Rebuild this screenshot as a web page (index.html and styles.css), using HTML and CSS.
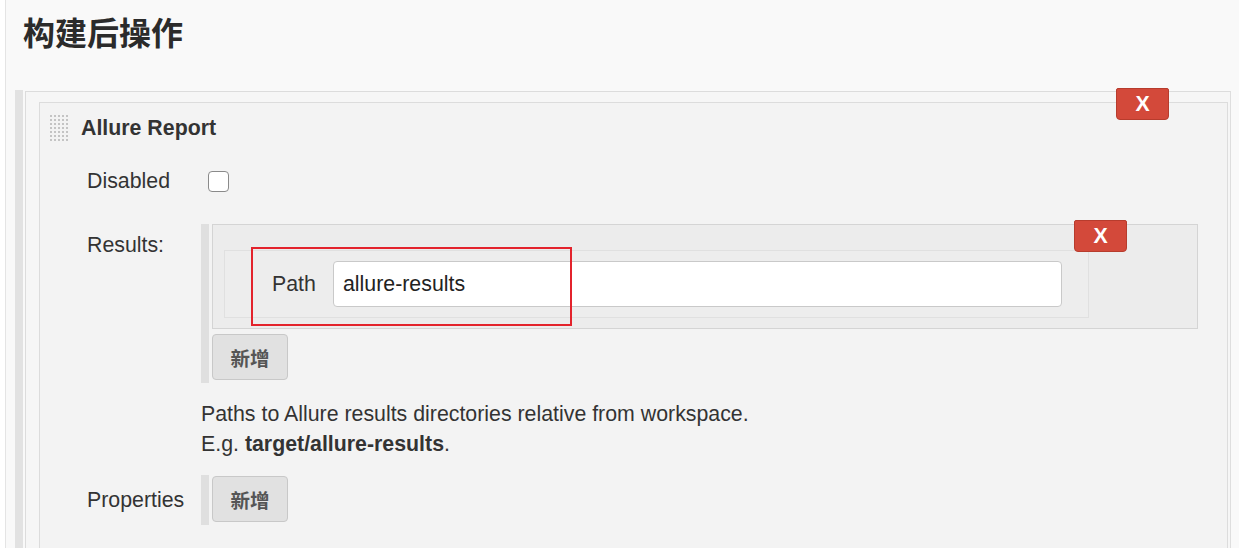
FILE: index.html
```html
<!DOCTYPE html>
<html lang="zh-CN">
<head>
  <meta charset="UTF-8">
  <meta name="viewport" content="width=device-width, initial-scale=1.0">
  <title>构建后操作</title>
  <link rel="stylesheet" href="styles.css">
</head>
<body>

  <div class="page">
    <h2 class="section-title">构建后操作</h2>

    <div class="publisher">
      <div class="chunk">
        <div class="box">
          <button class="delete-btn box-delete">X</button>

          <div class="box-header">
            <span class="handle"></span>
            <span class="box-name">Allure Report</span>
          </div>

          <div class="form">
            <div class="row row-disabled">
              <div class="label">Disabled</div>
              <div class="value"><input type="checkbox" class="check"></div>
            </div>

            <div class="row row-results">
              <div class="label label-top">Results:</div>
              <div class="value">
                <div class="repeater">
                  <div class="repeated">
                    <button class="delete-btn item-delete">X</button>
                    <div class="path-row">
                      <span class="path-label">Path</span>
                      <input type="text" class="path-input" value="allure-results">
                    </div>
                    <div class="highlight"></div>
                  </div>
                  <button class="add-btn">新增</button>
                </div>
              </div>
            </div>

            <div class="row row-help">
              <div class="label"></div>
              <div class="value help">
                Paths to Allure results directories relative from workspace.<br>
                E.g. <b>target/allure-results</b>.
              </div>
            </div>

            <div class="row row-props">
              <div class="label">Properties</div>
              <div class="value">
                <div class="repeater repeater-empty">
                  <button class="add-btn">新增</button>
                </div>
              </div>
            </div>
          </div>
        </div>
      </div>
    </div>
  </div>

</body>
</html>
```

FILE: styles.css
```css
body, html {
  height: 100%;
  margin: 0;
  overflow: hidden;
  background: #fff;
}

body {
  font-family: "Liberation Sans", Arial, "Noto Sans CJK SC", sans-serif;
  font-size: 21.33px;
  color: #333;
}

.page {
  display: flex;
  flex-direction: column;
  margin-left: 5px;
  height: 100%;
  border-left: 1px solid #e4e4e4;
  background: #f9f9f9;
}

.section-title {
  flex: none;
  margin: 0;
  padding: 9px 0 0 17px;
  height: 81px;
  box-sizing: border-box;
  font-family: "Noto Sans CJK SC", "Liberation Sans", sans-serif;
  font-size: 32px;
  line-height: 44px;
  font-weight: 700;
  color: #2b2b2b;
}

.publisher {
  flex: 1;
  display: flex;
  margin-left: 9px;
  margin-top: 9px;
  border-left: 8px solid #e2e2e2;
  padding-left: 2px;
}

.chunk {
  flex: 1;
  display: flex;
  flex-direction: column;
  border-left: 1px solid #dcdcdc;
  border-top: 1px solid #dcdcdc;
  border-right: 1px solid #dedede;
  margin-top: 1px;
  margin-right: 8px;
  background: #f6f6f6;
  padding: 10px 2px 0 13px;
}

.box {
  flex: 1;
  position: relative;
  border: 1px solid #dcdcdc;
  border-bottom: none;
  background: #f3f3f3;
}

/* red X buttons */
.delete-btn {
  position: absolute;
  width: 53px;
  height: 32px;
  padding: 0;
  border: 1px solid #b73c2d;
  border-radius: 2px 2px 4px 4px;
  background: #d3493a;
  color: #fff;
  font-family: "Liberation Sans", Arial, sans-serif;
  font-size: 21.33px;
  font-weight: 700;
  line-height: 30px;
  cursor: pointer;
}

.box-delete {
  top: -15px;
  right: 58px;
}

.item-delete {
  top: -5px;
  right: 70px;
}

.box-header {
  display: flex;
  align-items: center;
  padding: 11px 0 0 9px;
  height: 28px;
}

.handle {
  width: 20px;
  height: 28px;
  background-image: radial-gradient(circle, #c4c4c4 0.9px, transparent 1.3px);
  background-size: 4px 4px;
}

.box-name {
  margin-left: 12px;
  font-weight: 700;
}

.form {
  padding: 0 29px 0 47px;
}

.row {
  display: grid;
  grid-template-columns: 114px 1fr;
}

.label {
  line-height: 26px;
}

.row-disabled {
  margin-top: 26px;
  align-items: center;
}

.check {
  appearance: none;
  -webkit-appearance: none;
  display: block;
  margin: 0 0 0 7px;
  width: 21px;
  height: 21px;
  border: 1px solid #8a8a8a;
  border-radius: 4px;
  background: #fff;
}

.row-results {
  margin-top: 30px;
}

.label-top {
  padding-top: 8px;
}

.repeater {
  border-left: 8px solid #dfdfdf;
  padding: 0 0 3px 3px;
}

.repeater-empty {
  padding-top: 1px;
}

.repeated {
  position: relative;
  border: 1px solid #d4d4d4;
  background: #ececec;
  padding: 25px 108px 10px 11px;
}

.path-row {
  display: flex;
  align-items: center;
  border: 1px solid #e0e0e0;
  background: #ededed;
  padding: 10px 26px 10px 47px;
}

.path-label {
  width: 61px;
}

.path-input {
  flex: 1;
  height: 46px;
  box-sizing: border-box;
  border: 1px solid #c9c9c9;
  border-radius: 4px;
  background: #fff;
  padding: 0 9px;
  font-family: "Liberation Sans", Arial, sans-serif;
  font-size: 21.33px;
  color: #222;
}

.highlight {
  position: absolute;
  left: 38px;
  top: 22px;
  width: 321px;
  height: 79px;
  box-sizing: border-box;
  border: 2px solid #e3232c;
}

.add-btn {
  display: block;
  margin-top: 5px;
  width: 76px;
  height: 46px;
  padding: 0;
  border: 1px solid #c8c8c8;
  border-radius: 4px;
  background: #e1e1e1;
  color: #555;
  font-family: "Noto Sans CJK SC", sans-serif;
  font-size: 19.5px;
  font-weight: 700;
  cursor: pointer;
}

.repeater-empty .add-btn {
  margin-top: 0;
}

.row-help {
  margin-top: 16px;
}

.help {
  line-height: 30px;
}

.row-props {
  margin-top: 16px;
  align-items: center;
}
```
